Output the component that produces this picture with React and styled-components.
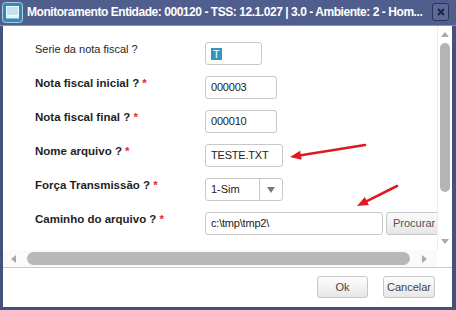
import React from 'react';
import styled, { createGlobalStyle } from 'styled-components';

const GlobalStyle = createGlobalStyle`
  html, body {
    margin: 0;
    padding: 0;
    background: #fff;
  }
  body {
    font-family: "Liberation Sans", Arial, sans-serif;
  }
`;

const fields = [
  { id: 'serie', label: 'Serie da nota fiscal ?', required: false, width: 57, value: 'T', selected: true },
  { id: 'ini', label: 'Nota fiscal inicial ?', required: true, width: 72, value: '000003' },
  { id: 'fim', label: 'Nota fiscal final ?', required: true, width: 72, value: '000010' },
  { id: 'nome', label: 'Nome arquivo ?', required: true, width: 78, value: 'TESTE.TXT' },
  { id: 'forca', label: 'Força Transmissão ?', required: true, width: 78, value: '1-Sim', select: true },
  { id: 'path', label: 'Caminho do arquivo ?', required: true, width: 178, value: 'c:\\tmp\\tmp2\\', browse: true },
];

const App = () => {
  return (
    <>
      <GlobalStyle />
      <Window>
        <TitleBar>
          <AppIcon />
          <Title>Monitoramento Entidade: 000120 - TSS: 12.1.027 | 3.0 - Ambiente: 2 - Hom...</Title>
          <CloseBtn>
            <svg width="8" height="8" viewBox="0 0 8 8">
              <path d="M1 1 L7 7 M7 1 L1 7" stroke="#1c2344" strokeWidth="2" />
            </svg>
          </CloseBtn>
        </TitleBar>

        <Body>
          <ScrollArea>
            <Viewport>
              <Form>
                {fields.map((f) => (
                  <Row key={f.id}>
                    <Label $bold={f.required}>
                      {f.label}
                      {f.required && <Req> *</Req>}
                    </Label>
                    <Controls>
                      {f.select ? (
                        <Select $w={f.width}>
                          <span>{f.value}</span>
                          <Caret />
                        </Select>
                      ) : (
                        <Field $w={f.width}>
                          {f.selected ? <Selected>{f.value}</Selected> : f.value}
                        </Field>
                      )}
                      {f.browse && <BrowseBtn>Procurar</BrowseBtn>}
                    </Controls>
                  </Row>
                ))}
              </Form>
            </Viewport>

            <VScroll>
              <Arrow $dir="up" />
              <VThumb />
              <Arrow $dir="down" />
            </VScroll>

            <HScroll>
              <Arrow $dir="left" />
              <HThumb />
              <Arrow $dir="right" />
            </HScroll>
            <Corner />
          </ScrollArea>

          <Footer>
            <Button $w={51}>Ok</Button>
            <Button $w={52}>Cancelar</Button>
          </Footer>
        </Body>

        <Annotations width="456" height="310" viewBox="0 0 456 310">
          <RedArrow x1={365} y1={145} x2={290} y2={157} />
          <RedArrow x1={397} y1={186} x2={357} y2={206} />
        </Annotations>
      </Window>
    </>
  );
};

const AppIcon = () => (
  <svg width="21" height="21" viewBox="0 0 21 21">
    <rect x="0.5" y="0.5" width="20" height="20" rx="3" fill="#2f8ab6" stroke="#a9cde0" />
    <rect x="4.5" y="4.5" width="12" height="9" fill="#c4e2ee" stroke="#f2f8fb" />
    <rect x="4" y="14" width="13" height="2.5" fill="#e6f1f6" />
  </svg>
);

const RedArrow = ({ x1, y1, x2, y2 }) => {
  const a = Math.atan2(y2 - y1, x2 - x1);
  const len = 11;
  const half = 4.5;
  const bx = x2 - len * Math.cos(a);
  const by = y2 - len * Math.sin(a);
  const px = -Math.sin(a) * half;
  const py = Math.cos(a) * half;
  return (
    <g>
      <line x1={x1} y1={y1} x2={bx} y2={by} stroke="#dc1a1f" strokeWidth="2.6" strokeLinecap="round" />
      <polygon points={`${x2},${y2} ${bx + px},${by + py} ${bx - px},${by - py}`} fill="#dc1a1f" />
    </g>
  );
};

const Window = styled.div`
  position: relative;
  width: 456px;
  height: 310px;
  display: flex;
  flex-direction: column;
  overflow: hidden;
  background: #fff;
`;

const TitleBar = styled.div`
  height: 26px;
  flex: none;
  box-sizing: border-box;
  display: flex;
  align-items: center;
  gap: 4px;
  padding: 0 7px 1px 2px;
  background: #505e8e;
  border-bottom: 1px solid #8792b4;
`;

const Title = styled.div`
  flex: 1;
  min-width: 0;
  white-space: nowrap;
  overflow: hidden;
  color: #fff;
  font-size: 12px;
  letter-spacing: -0.45px;
  font-weight: bold;
`;

const CloseBtn = styled.div`
  width: 17px;
  height: 18px;
  flex: none;
  box-sizing: border-box;
  display: flex;
  align-items: center;
  justify-content: center;
  border: 1px solid #2c3455;
  border-radius: 3px;
  background: #5d6a98;
`;

const Body = styled.div`
  flex: 1;
  display: flex;
  flex-direction: column;
  border: 3px solid #44527a;
  border-top: 0;
  border-right-width: 4px;
`;

const ScrollArea = styled.div`
  height: 241px;
  flex: none;
  display: grid;
  grid-template-columns: 1fr 15px;
  grid-template-rows: 1fr 17px;
  border-bottom: 1px solid #c9c9c9;
`;

const Viewport = styled.div`
  overflow: hidden;
  min-width: 0;
`;

const Form = styled.div`
  display: flex;
  flex-direction: column;
  gap: 11px;
  padding: 16px 0 0 32px;
`;

const Row = styled.div`
  display: grid;
  grid-template-columns: 170px auto;
  align-items: start;
`;

const Label = styled.div`
  font-size: ${(p) => (p.$bold ? '11.5px' : '11px')};
  line-height: 14px;
  color: #1f1f1f;
  font-weight: ${(p) => (p.$bold ? 'bold' : 'normal')};
  white-space: nowrap;
`;

const Req = styled.span`
  color: #e0282d;
`;

const Controls = styled.div`
  display: flex;
  gap: 3px;
`;

const Field = styled.div`
  width: ${(p) => p.$w}px;
  height: 23px;
  flex: none;
  box-sizing: border-box;
  border: 1px solid #c8c8c8;
  border-radius: 3px;
  padding: 0 5px;
  font-size: 11px;
  letter-spacing: -0.2px;
  line-height: 21px;
  color: #222;
  white-space: nowrap;
  overflow: hidden;
`;

const Selected = styled.span`
  display: inline-block;
  background: #3596bd;
  color: #fff;
  line-height: 12px;
  padding: 0 2px;
  vertical-align: middle;
`;

const Select = styled.div`
  width: ${(p) => p.$w}px;
  height: 23px;
  box-sizing: border-box;
  border: 1px solid #c8c8c8;
  border-radius: 3px;
  display: grid;
  grid-template-columns: 1fr 23px;
  font-size: 11px;
  line-height: 21px;
  color: #222;
  span {
    padding-left: 5px;
  }
`;

const Caret = styled.div`
  border-left: 1px solid #c8c8c8;
  display: flex;
  align-items: center;
  justify-content: center;
  &::after {
    content: '';
    border-left: 4px solid transparent;
    border-right: 4px solid transparent;
    border-top: 6px solid #7a7a7a;
  }
`;

const BrowseBtn = styled.div`
  flex: none;
  width: 60px;
  height: 23px;
  box-sizing: border-box;
  border: 1px solid #c6c6c6;
  border-radius: 3px;
  background: linear-gradient(#fbfbfb, #e6e6e6);
  color: #555;
  font-size: 11px;
  line-height: 21px;
  padding-left: 6px;
`;

const arrowBorders = {
  up: 'border-left: 4px solid transparent; border-right: 4px solid transparent; border-bottom: 5px solid #a9a9a9;',
  down: 'border-left: 4px solid transparent; border-right: 4px solid transparent; border-top: 5px solid #a9a9a9;',
  left: 'border-top: 4px solid transparent; border-bottom: 4px solid transparent; border-right: 5px solid #a9a9a9;',
  right: 'border-top: 4px solid transparent; border-bottom: 4px solid transparent; border-left: 5px solid #a9a9a9;',
};

const Arrow = styled.div`
  width: 0;
  height: 0;
  flex: none;
  ${(p) => arrowBorders[p.$dir]}
`;

const VScroll = styled.div`
  display: flex;
  flex-direction: column;
  align-items: center;
  padding: 6px 0 6px;
  background: #fff;
  border-left: 1px solid #ececec;
  ${Arrow}:last-child {
    margin-top: auto;
  }
`;

const VThumb = styled.div`
  width: 10px;
  height: 149px;
  margin-top: 6px;
  border-radius: 5px;
  background: #b4b4b4;
`;

const HScroll = styled.div`
  display: flex;
  align-items: center;
  padding: 0 10px 0 8px;
  background: #fafafa;
  ${Arrow}:last-child {
    margin-left: auto;
  }
`;

const HThumb = styled.div`
  width: 383px;
  height: 13px;
  margin-left: 11px;
  border-radius: 7px;
  background: #b8b8b8;
`;

const Corner = styled.div`
  background: #fff;
`;

const Footer = styled.div`
  flex: 1;
  display: flex;
  justify-content: flex-end;
  align-items: flex-start;
  gap: 15px;
  padding: 8px 17px 0 0;
`;

const Button = styled.div`
  width: ${(p) => p.$w}px;
  height: 22px;
  box-sizing: border-box;
  border: 1px solid #c6c6c6;
  border-radius: 3px;
  background: linear-gradient(#fdfdfd, #e7e7e7);
  color: #444;
  font-size: 11px;
  line-height: 20px;
  text-align: center;
`;

const Annotations = styled.svg`
  position: absolute;
  left: 0;
  top: 0;
  pointer-events: none;
`;

export default App;
